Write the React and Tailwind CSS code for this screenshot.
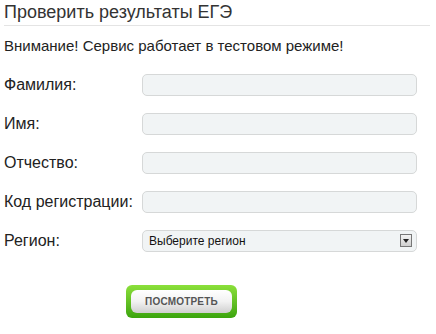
import React from 'react';

const fields = ['Фамилия:', 'Имя:', 'Отчество:', 'Код регистрации:'];

const Field = ({ label, children }) => (
  <div className="flex items-center h-[39px]">
    <div className="w-[138px] text-[16px] text-[#222]">{label}</div>
    {children}
  </div>
);

export default function App() {
  return (
    <div className="w-[436px] h-[334px] bg-white px-1 pt-[1px] font-['Liberation_Sans',Arial,sans-serif] text-[#222]">
      <h1 className="text-[18px] leading-[23px] text-[#333] border-b border-[#e4e4e4] pb-[1px] mr-[2px]">
        Проверить результаты ЕГЭ
      </h1>
      <p className="text-[15px] mt-[10px] leading-[20px]">Внимание! Сервис работает в тестовом режиме!</p>

      <div className="mt-[9px]">
        {fields.map((f, i) => (
          <Field key={i} label={f}>
            <input className="w-[275px] h-[22px] rounded-[5px] border border-[#d6d8d8] bg-[#f1f4f5] outline-none" />
          </Field>
        ))}
        <Field label="Регион:">
          <div className="w-[275px] h-[22px] rounded-[5px] border border-[#d6d8d8] bg-[#f1f4f5] flex items-center justify-between pl-[6px] pr-[4px]">
            <span className="text-[12px] text-[#111]">Выберите регион</span>
            <span className="w-[12px] h-[13px] border border-[#777] bg-gradient-to-b from-[#f4f4f4] to-[#cfcfcf] flex items-center justify-center">
              <svg width="6" height="4" viewBox="0 0 6 4"><path d="M0 0h6L3 4z" fill="#222" /></svg>
            </span>
          </div>
        </Field>
      </div>

      <div className="ml-[122px] mt-[25px] w-[111px] h-[33px] rounded-[6px] bg-gradient-to-b from-[#8be03a] to-[#3aa40c] p-[5px] flex">
        <button className="flex-1 rounded-[6px] bg-gradient-to-b from-white via-[#f2f2f2] to-[#cfcfcf] text-[10px] font-bold text-[#555] tracking-[0.2px]">
          ПОСМОТРЕТЬ
        </button>
      </div>
    </div>
  );
}
